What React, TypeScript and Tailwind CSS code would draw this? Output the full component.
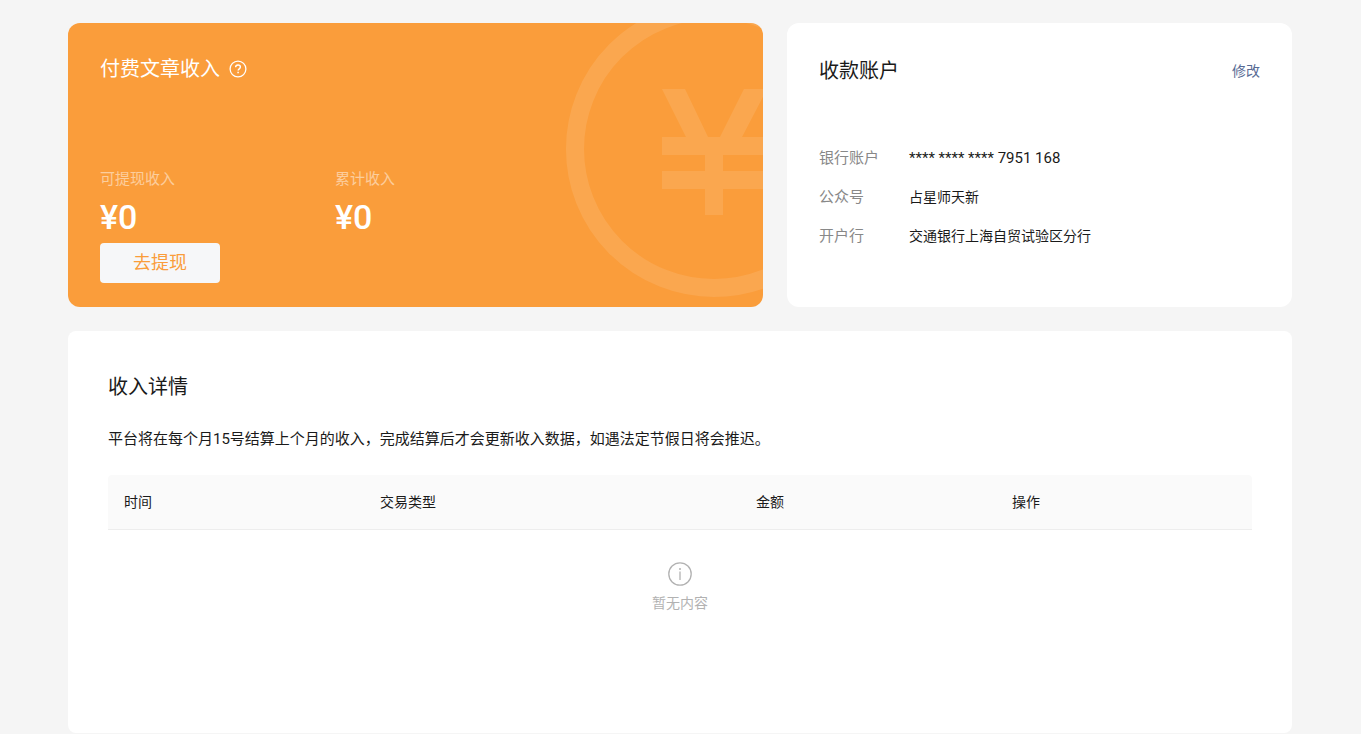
const accountRows = [
    { label: '银行账户', value: '**** **** **** 7951 168', valueClass: 'text-[15px]' },
    { label: '公众号', value: '占星师天新', valueClass: 'text-sm' },
    { label: '开户行', value: '交通银行上海自贸试验区分行', valueClass: 'text-sm' },
];

const incomeStats = [
    { label: '可提现收入', amount: '¥0' },
    { label: '累计收入', amount: '¥0' },
];

const CoinWatermark = () => (
    <svg
        className="absolute top-0 right-0 h-full pointer-events-none"
        viewBox="0 0 198 284"
        fill="none"
        aria-hidden="true"
    >
        <g opacity="0.1">
            <circle cx="149" cy="126" r="139" stroke="#fff" strokeWidth="18" />
            <path
                fill="#fff"
                d="M97 66h23l23 48h12l24-48h23l-25 48h24v18h-43v16h43v18h-43v26h-18v-26H97v-18h43v-16H97v-18h24z"
            />
        </g>
    </svg>
);

const HelpIcon = () => (
    <svg className="w-[18px] h-[18px]" viewBox="0 0 18 18" fill="none" stroke="currentColor" aria-hidden="true">
        <circle cx="9" cy="9" r="7.9" strokeWidth="1.3" />
        <path d="M6.6 7.3c0-1.4 1-2.3 2.4-2.3s2.4.9 2.4 2.1c0 1.7-2.3 1.8-2.3 3.5" strokeWidth="1.4" />
        <path d="M9.1 11.7v1.5" strokeWidth="1.5" />
    </svg>
);

const InfoIcon = () => (
    <svg className="w-6 h-6" viewBox="0 0 24 24" fill="none" stroke="currentColor" aria-hidden="true">
        <circle cx="12" cy="12" r="11.2" strokeWidth="1.3" />
        <path d="M12 9.5v8.5" strokeWidth="1.3" />
        <circle cx="12" cy="7" r="1" fill="currentColor" stroke="none" />
    </svg>
);

const IncomeCard = () => (
    <section className="relative overflow-hidden rounded-xl bg-[#fa9d3b] text-white px-8 pt-8 pb-6">
        <CoinWatermark />
        <div className="relative">
            <div className="flex items-center gap-[9px]">
                <h2 className="text-xl leading-7">付费文章收入</h2>
                <button type="button" aria-label="收入说明">
                    <HelpIcon />
                </button>
            </div>

            <dl className="mt-[85px] flex">
                {incomeStats.map((stat) => (
                    <div key={stat.label} className="w-[235px]">
                        <dt className="text-[15px] leading-[22px] text-white/50">{stat.label}</dt>
                        <dd className="mt-[7px] font-[Roboto] font-medium text-[34px] leading-10">{stat.amount}</dd>
                    </div>
                ))}
            </dl>

            <button type="button" className="mt-[6px] w-[120px] h-10 rounded-sm bg-[#f6f7f9] text-lg text-[#fa9d3b]">
                去提现
            </button>
        </div>
    </section>
);

const AccountCard = () => (
    <section className="rounded-xl bg-white px-8 pt-[34px] pb-8">
        <div className="flex items-center justify-between">
            <h2 className="text-xl leading-7">收款账户</h2>
            <a href="#account" className="text-sm text-[#576b95]">修改</a>
        </div>

        <dl className="mt-[62px] flex flex-col gap-[17px]">
            {accountRows.map((row) => (
                <div key={row.label} className="flex items-center leading-[22px]">
                    <dt className="w-[90px] text-[15px] text-[#888]">{row.label}</dt>
                    <dd className={row.valueClass}>{row.value}</dd>
                </div>
            ))}
        </dl>
    </section>
);

const IncomeDetails = () => (
    <section className="mt-6 rounded-lg bg-white px-10 pt-[42px] pb-[120px]">
        <h2 className="text-xl leading-7">收入详情</h2>
        <p className="mt-[27px] text-[15px] leading-[22px]">
            平台将在每个月15号结算上个月的收入，完成结算后才会更新收入数据，如遇法定节假日将会推迟。
        </p>

        <table className="mt-[25px] w-full table-fixed border-separate border-spacing-0 text-sm text-left">
            <thead className="bg-[#fafafa]">
                <tr>
                    <th className="w-64 h-[55px] px-4 font-normal border-b border-[#ededed] rounded-tl">时间</th>
                    <th className="px-4 font-normal border-b border-[#ededed]">交易类型</th>
                    <th className="w-64 px-4 font-normal border-b border-[#ededed]">金额</th>
                    <th className="w-64 px-4 font-normal border-b border-[#ededed] rounded-tr">操作</th>
                </tr>
            </thead>
            <tbody>
                <tr>
                    <td colSpan={4} className="pt-8 text-[#b2b2b2]">
                        <div className="flex flex-col items-center gap-[7px]">
                            <InfoIcon />
                            <p>暂无内容</p>
                        </div>
                    </td>
                </tr>
            </tbody>
        </table>
    </section>
);

export default function App() {
    return (
        <main
            lang="zh-CN"
            className="min-h-screen bg-[#f5f5f5] pt-[23px] pl-[68px] pr-[69px] font-[Roboto,'Noto_Sans_CJK_SC',sans-serif] text-[#1a1a1a]"
        >
            <div className="grid grid-cols-[695fr_505fr] gap-6">
                <IncomeCard />
                <AccountCard />
            </div>
            <IncomeDetails />
        </main>
    );
}
